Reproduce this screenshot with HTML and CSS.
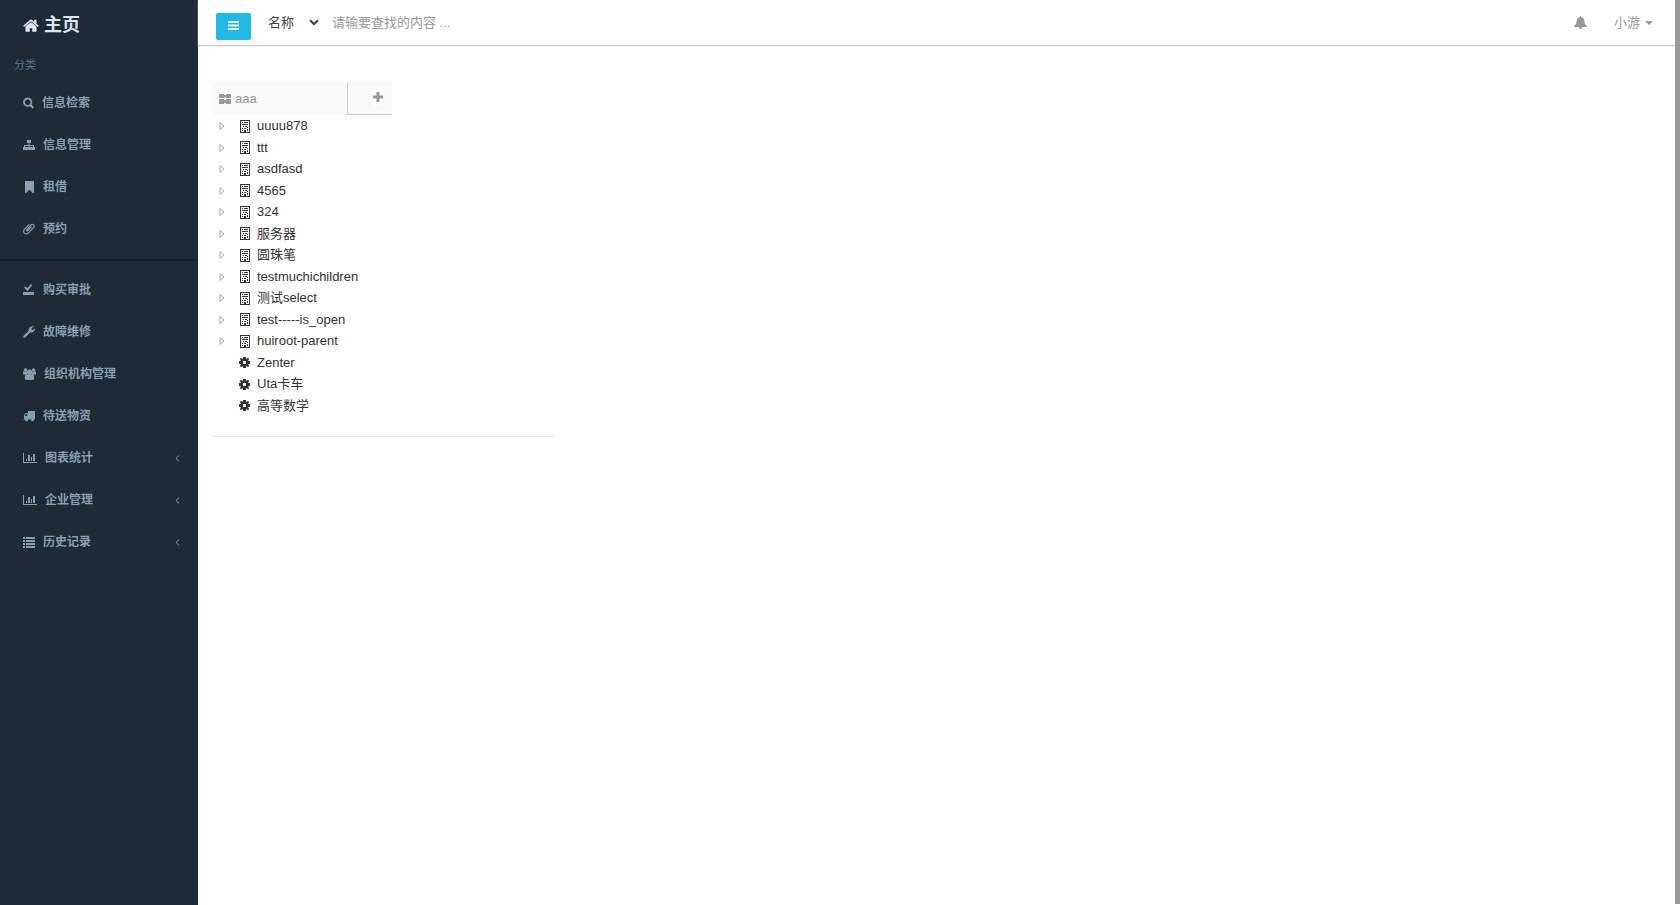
FILE: index.html
```html
<!DOCTYPE html>
<html lang="zh-CN">
<head>
<meta charset="utf-8">
<title>主页</title>
<link rel="stylesheet" href="styles.css">
</head>
<body>
<div class="app">
  <nav class="sidebar" aria-label="主导航">
    <a class="brand" href="#">
      <svg class="brand-icon" viewBox="64 190 1664 1360" aria-hidden="true"><path d="M1472 992v480q0 26-19 45t-45 19h-384v-384h-256v384h-384q-26 0-45-19t-19-45v-480q0-1 .5-3t.5-3l575-474 575 474q1 2 1 6zm223-69l-62 74q-8 9-21 11h-3q-13 0-21-7l-692-577-692 577q-12 8-24 7-13-2-21-11l-62-74q-8-10-7-23.5t11-21.5l719-599q32-26 76-26t76 26l244 204v-195q0-14 9-23t23-9h192q14 0 23 9t9 23v408l219 182q10 8 11 21.500t-7 23.500z"/></svg>
      <span>主页</span>
    </a>
    <div class="section-title">分类</div>
    <ul class="menu">
      <li><a href="#"><svg class="icon icon-narrow" viewBox="0 0 11 12" aria-hidden="true"><path d="M4.700 1.500a3.700 3.700 0 1 0 0 7.400a3.700 3.700 0 1 0 0-7.400zM7.500 8l2.800 3" fill="none" stroke="currentColor" stroke-width="1.900"/></svg><span>信息检索</span></a></li>
      <li><a href="#"><svg class="icon" viewBox="0 0 12 12" aria-hidden="true"><path d="M4 1h4v3H6.500V6H11v2h1v3H8V8h2V7H6.500v1H8v3H4V8h1.500V7H2v1h2v3H0V8h1V6h4.500V4H4z"/></svg><span>信息管理</span></a></li>
      <li><a href="#"><svg class="icon" viewBox="0 0 12 12" aria-hidden="true"><path d="M2 0h9v12h-1L6.500 8.700 3 12H2z"/></svg><span>租借</span></a></li>
      <li><a href="#"><svg class="icon" viewBox="0 0 12 12" aria-hidden="true"><path d="M8.800 3.600L4.900 7.500c-.8.800-1.900-.1-1.100-1L7.800 2.200c2-2 4.600.4 2.700 2.500l-5 5.100c-2.800 2.800-6.700-.6-3.900-3.600L6.400 1.300" fill="none" stroke="currentColor" stroke-width="1.200"/></svg><span>预约</span></a></li>
    </ul>
    <hr class="divider">
    <ul class="menu">
      <li><a href="#"><svg class="icon" viewBox="0 0 12 12" aria-hidden="true"><path d="M0 8h11v3H0zM1 3.500l1.300-1L4.500 4 8 0l1.300 1.300L4.500 7z"/></svg><span>购买审批</span></a></li>
      <li><a href="#"><svg class="icon" viewBox="0 0 12 12" aria-hidden="true"><path d="M0.500 9.800L5.700 4.800C5 2.300 7 .1 9.800.2l1 .4-2.300 1.700.2 1.200 1.300.4L12 2.300c.3 2.900-2.200 4.700-4.500 4L2.200 11.600C.9 12.400-.4 11 .5 9.800z"/></svg><span>故障维修</span></a></li>
      <li><a href="#"><svg class="icon icon-group" viewBox="0 0 13 12" aria-hidden="true"><circle cx="2.500" cy="2" r="1.800"/><circle cx="10.500" cy="2" r="1.800"/><circle cx="6.500" cy="4" r="2.600"/><path d="M0 3.500h4v3H0zM9 3.500h4v3H9zM2.500 6.300h8l.8 3.700q0 2-2 2H3.700q-2 0-2-2z"/></svg><span>组织机构管理</span></a></li>
      <li><a href="#"><svg class="icon" viewBox="0 0 12 12" aria-hidden="true"><path fill-rule="evenodd" d="M5 1h7v8.500H0V9h1V5l2-2h2zM2 6h2.200V4H3.300L2 5.400z"/><circle cx="3.500" cy="9.800" r="1.500"/><circle cx="9.500" cy="9.800" r="1.500"/></svg><span>待送物资</span></a></li>
      <li><a href="#"><svg class="icon icon-chart" viewBox="0 0 14 12" aria-hidden="true"><path d="M0 1h1v9h13v1H0zM3 7h1v2H3zM5 3h2v6H5zM8 5h1v4H8zM10 2h2v7h-2z"/></svg><span>图表统计</span><svg class="arrow" viewBox="0 0 5 7" aria-hidden="true"><path d="M4.200.5L1 3.500l3.200 3" fill="none" stroke="currentColor"/></svg></a></li>
      <li><a href="#"><svg class="icon icon-chart" viewBox="0 0 14 12" aria-hidden="true"><path d="M0 1h1v9h13v1H0zM3 7h1v2H3zM5 3h2v6H5zM8 5h1v4H8zM10 2h2v7h-2z"/></svg><span>企业管理</span><svg class="arrow" viewBox="0 0 5 7" aria-hidden="true"><path d="M4.200.5L1 3.500l3.200 3" fill="none" stroke="currentColor"/></svg></a></li>
      <li><a href="#"><svg class="icon" viewBox="0 0 12 12" aria-hidden="true"><path d="M0 1h2v2H0zM3 1h9v2H3zM0 4h2v2H0zM3 4h9v2H3zM0 7h2v2H0zM3 7h9v2H3zM0 10h2v2H0zM3 10h9v2H3z"/></svg><span>历史记录</span><svg class="arrow" viewBox="0 0 5 7" aria-hidden="true"><path d="M4.200.5L1 3.500l3.200 3" fill="none" stroke="currentColor"/></svg></a></li>
    </ul>
  </nav>

  <div class="page">
    <header class="topbar">
      <button class="toggle" type="button" aria-label="切换菜单"><svg viewBox="0 0 11 9" aria-hidden="true"><path d="M0 0h11v2H0zM0 3.500h11v2H0zM0 7h11v2H0z"/></svg></button>
      <form class="search">
        <div class="field">
          <select aria-label="查找字段"><option>名称</option></select>
          <svg class="chevron" viewBox="0 0 10 7" aria-hidden="true"><path d="M1 1.200l4 3.800 4-3.800" fill="none" stroke="currentColor" stroke-width="2.200"/></svg>
        </div>
        <input type="text" placeholder="请输要查找的内容 ..." aria-label="查找内容">
      </form>
      <button class="bell" type="button" aria-label="通知"><svg viewBox="0 0 13 13" aria-hidden="true"><path d="M6 0h1v1q3.300.5 3.300 4 0 3.500 2.700 5v1H8.200q-.2 2-1.700 2t-1.700-2H0v-1q2.700-1.500 2.700-5Q2.700 1.500 6 1z"/></svg></button>
      <button class="user" type="button"><span>小游</span><svg viewBox="0 0 8 4" aria-hidden="true"><path d="M0 0h8L4 4z"/></svg></button>
    </header>

    <main class="content">
      <div class="tabs">
        <button class="tab" type="button"><svg viewBox="0 0 12 10" aria-hidden="true"><path d="M0 0h5v1h2V0h5v4H7V3.500H5V4H0zM0 5h5v1h2V5h5v5H7V9H5v1H0z"/></svg><span>aaa</span></button>
        <button class="add" type="button" aria-label="添加"><svg viewBox="0 0 10 10" aria-hidden="true"><path d="M3.500 0h3v3.500H10v3H6.500V10h-3V6.500H0v-3h3.500z"/></svg></button>
      </div>
      <svg class="symbols" aria-hidden="true">
        <symbol id="expand" viewBox="0 0 6 8"><path d="M1 .5v7L5 4z" fill="#fff" stroke="#aaa"/></symbol>
        <symbol id="building" viewBox="0 0 11 13"><path fill-rule="evenodd" d="M0 0h10v13H0zM1 1v11h3v-2h2v2h3V1zM2 2h1v1H2zM4 2h4v1H4zM2 4h6v1H2zM3 6h1v1H3zM5 6h2v1H5zM7 7h1v1H7zM2 8h1v1H2zM4 8h2v1H4zM2 10h1v1H2zM7 9h1v2H7z"/></symbol>
        <symbol id="gear" viewBox="0 0 11 11"><path fill-rule="evenodd" d="M4 0h3v1.500l.8.300L9 .8 10.200 2l-1 1.200.3.800H11v3H9.500l-.3.800 1 1.200L9 10.200l-1.200-1-.8.300V11H4V9.500l-.8-.3-1.200 1L.8 9l1-1.200L1.500 7H0V4h1.500l.3-.8L.8 2 2 .8l1.200 1L4 1.500zM4 4v3h3V4z"/></symbol>
      </svg>
      <ul class="tree">
        <li><svg class="expand"><use href="#expand"/></svg><svg class="node"><use href="#building"/></svg><a href="#">uuuu878</a></li>
        <li><svg class="expand"><use href="#expand"/></svg><svg class="node"><use href="#building"/></svg><a href="#">ttt</a></li>
        <li><svg class="expand"><use href="#expand"/></svg><svg class="node"><use href="#building"/></svg><a href="#">asdfasd</a></li>
        <li><svg class="expand"><use href="#expand"/></svg><svg class="node"><use href="#building"/></svg><a href="#">4565</a></li>
        <li><svg class="expand"><use href="#expand"/></svg><svg class="node"><use href="#building"/></svg><a href="#">324</a></li>
        <li><svg class="expand"><use href="#expand"/></svg><svg class="node"><use href="#building"/></svg><a href="#">服务器</a></li>
        <li><svg class="expand"><use href="#expand"/></svg><svg class="node"><use href="#building"/></svg><a href="#">圆珠笔</a></li>
        <li><svg class="expand"><use href="#expand"/></svg><svg class="node"><use href="#building"/></svg><a href="#">testmuchichildren</a></li>
        <li><svg class="expand"><use href="#expand"/></svg><svg class="node"><use href="#building"/></svg><a href="#">测试select</a></li>
        <li><svg class="expand"><use href="#expand"/></svg><svg class="node"><use href="#building"/></svg><a href="#">test-----is_open</a></li>
        <li><svg class="expand"><use href="#expand"/></svg><svg class="node"><use href="#building"/></svg><a href="#">huiroot-parent</a></li>
        <li class="leaf"><svg class="node gear"><use href="#gear"/></svg><a href="#">Zenter</a></li>
        <li class="leaf"><svg class="node gear"><use href="#gear"/></svg><a href="#">Uta卡车</a></li>
        <li class="leaf"><svg class="node gear"><use href="#gear"/></svg><a href="#">高等数学</a></li>
      </ul>
    </main>
  </div>
  <div class="scrollbar"></div>
</div>
</body>
</html>
```

FILE: styles.css
```css
* { box-sizing: border-box; }

body {
  margin: 0;
  background: #fefefe;
  color: #333;
  font: 13px/20px "Liberation Sans", "Noto Sans CJK SC", sans-serif;
}

ul { margin: 0; padding: 0; list-style: none; }
a { color: inherit; text-decoration: none; }
svg { display: block; flex: none; fill: currentColor; }
button, input, select { margin: 0; padding: 0; border: 0; background: none; color: inherit; font: inherit; }
button { cursor: pointer; }

.app { display: flex; min-height: 100vh; }

/* Sidebar */
.sidebar { flex: none; width: 198px; background: #1e2b36; color: #869fb1; }
.brand {
  display: flex;
  align-items: center;
  gap: 5px;
  height: 50px;
  padding-left: 23px;
  color: #dfe5f0;
  font-size: 18px;
  font-weight: 700;
}
.brand-icon { width: 16px; height: 13px; }
.section-title { height: 32px; padding: 5px 14px; color: #587890; font-size: 11px; }
.menu a {
  display: flex;
  align-items: center;
  gap: 8px;
  height: 42px;
  padding: 0 18px 0 23px;
  font-size: 12px;
  font-weight: 700;
}
.icon { width: 12px; height: 12px; }
.icon-narrow { width: 11px; }
.icon-group { width: 13px; }
.icon-chart { width: 14px; }
.arrow { width: 5px; height: 7px; margin-left: auto; }
.divider { height: 2px; margin: 9px 0 8px; border: 0; background: #16202a; }

/* Top bar */
.page { flex: 1; min-width: 0; }
.topbar {
  display: flex;
  align-items: center;
  height: 46px;
  padding: 0 22px 0 18px;
  border-bottom: 1px solid #ccc;
  box-shadow: 0 1px 1px #f3f3f3;
}
.toggle {
  display: flex;
  align-items: center;
  justify-content: center;
  width: 35px;
  height: 27px;
  margin-top: 8px;
  padding-bottom: 2px;
  border-radius: 2px;
  background: #23b7e5;
  color: #fff;
}
.toggle svg { width: 11px; height: 9px; }
.search { display: flex; align-items: center; flex: 1; margin-left: 17px; }
.field { display: grid; align-items: center; width: 51px; }
.field > * { grid-area: 1 / 1; }
.field select { width: 100%; appearance: none; color: #444; }
.chevron { justify-self: end; width: 10px; height: 7px; color: #444; pointer-events: none; }
.search input { flex: 1; margin-left: 13px; }
.search input::placeholder { color: #999; opacity: 1; }
.bell, .user { color: #98999b; }
.bell svg { width: 13px; height: 13px; }
.user { display: flex; align-items: center; gap: 5px; margin-left: 27px; }
.user svg { width: 8px; height: 4px; }

/* Category tabs and tree */
.content { padding: 36px 14px; }
.tabs { display: flex; width: 180px; height: 33px; background: #fafafa; color: #999; }
.tab { display: flex; align-items: center; gap: 4px; flex: 1; padding-left: 7px; }
.tab svg { width: 12px; height: 10px; }
.add {
  display: flex;
  align-items: center;
  justify-content: center;
  width: 45px;
  padding: 0 0 3px 16px;
  border: solid #ccc;
  border-width: 0 0 1px 1px;
}
.add svg { width: 10px; height: 18px; padding: 4px 0; background: #fff; }
.symbols { position: absolute; width: 0; height: 0; }
.tree { max-width: 342px; padding-bottom: 20px; border-bottom: 1px solid #eaeaea; }
.tree li { display: flex; align-items: center; height: 22px; padding-left: 7px; }
.tree li:nth-child(even) { height: 21px; }
.tree .leaf { padding-left: 27px; }
.expand { width: 6px; height: 8px; margin-right: 15px; }
.node { width: 11px; height: 13px; margin-right: 6px; shape-rendering: crispEdges; }
.gear { margin-right: 7px; shape-rendering: auto; }

.scrollbar { flex: none; width: 5px; margin-bottom: 1px; background: #999; }
```
